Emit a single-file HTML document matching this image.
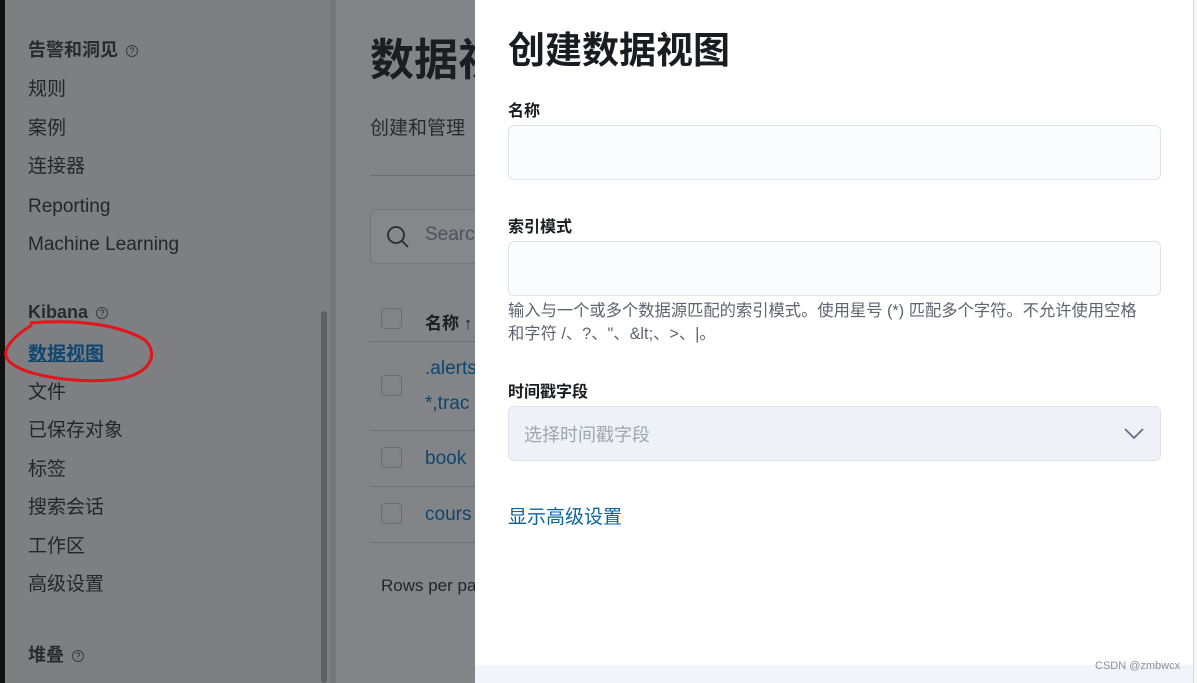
<!DOCTYPE html>
<html><head><meta charset="utf-8"><style>
*{margin:0;padding:0;box-sizing:border-box}
body{width:1197px;height:683px;overflow:hidden;position:relative;background:#838487;font-family:"Liberation Sans","Noto Sans CJK SC",sans-serif;}
.a{position:absolute;white-space:nowrap}
.side{position:absolute;left:0;top:0;width:330px;height:683px;background:#7e7f82}
.nav{font-size:19px;color:#25262a;left:28px;line-height:24px}
.h{font-weight:bold;font-size:18px;color:#2a2b2e;left:28px;line-height:24px}
.q{display:inline-block;width:12px;height:12px;border:1px solid #3a3b3e;border-radius:50%;font-size:9px;text-align:center;line-height:11px;vertical-align:middle;margin-left:8px;font-weight:normal}
.cb{position:absolute;left:381px;width:21px;height:21px;border:1px solid #6a6b70;border-radius:4px}
.ln{position:absolute;left:370px;width:105px;height:1px;background:#6d6e73}
.lnk{color:#0e466f;font-size:19px;line-height:24px}
.fly{position:absolute;left:475px;top:0;width:718px;height:683px;background:#fff}
.lab{font-weight:bold;font-size:16px;color:#1a1c21;left:33px}
.inp{position:absolute;left:33px;width:653px;height:55px;background:#fbfcfd;border:1px solid #dfe3ea;border-radius:6px}
</style></head><body>
<div class="side"></div>
<div class="a" style="left:0;top:0;width:5px;height:683px;background:#111"></div>
<div class="a" style="left:321px;top:311px;width:6px;height:372px;background:#5f6064;border-radius:3px"></div>
<div class="a" style="left:330px;top:0;width:6px;height:683px;background:#76777a"></div>
<div class="a h" style="top:38px">告警和洞见<span class="q">?</span></div>
<div class="a nav" style="top:78px">规则</div>
<div class="a nav" style="top:117px">案例</div>
<div class="a nav" style="top:155px">连接器</div>
<div class="a nav" style="top:195px">Reporting</div>
<div class="a nav" style="top:233px">Machine Learning</div>
<div class="a h" style="top:300px">Kibana<span class="q">?</span></div>
<div class="a nav" style="top:343px;color:#0e466f;font-weight:bold;text-decoration:underline">数据视图</div>
<div class="a nav" style="top:381px">文件</div>
<div class="a nav" style="top:419px">已保存对象</div>
<div class="a nav" style="top:458px">标签</div>
<div class="a nav" style="top:496px">搜索会话</div>
<div class="a nav" style="top:535px">工作区</div>
<div class="a nav" style="top:573px">高级设置</div>
<div class="a h" style="top:643px">堆叠<span class="q">?</span></div>
<svg class="a" style="left:0;top:315px" width="160" height="70"><path d="M30 8 C 80 4, 120 10, 145 25 C 160 40, 150 62, 110 65 C 70 68, 20 60, 8 45 C 0 35, 15 20, 32 10" fill="none" stroke="#e3141a" stroke-width="3"/></svg>
<div class="a" style="left:370px;top:24px;font-size:44px;font-weight:bold;color:#1c1d20">数据视图</div>
<div class="a" style="left:370px;top:113px;font-size:19px;color:#2a2b2e">创建和管理</div>
<div class="ln" style="top:175px"></div>
<div class="a" style="left:370px;top:209px;width:120px;height:55px;border:1px solid #75767b;border-radius:6px;background:#86878a"></div>
<svg class="a" style="left:385px;top:224px" width="26" height="26"><circle cx="11" cy="11" r="8" fill="none" stroke="#2a2b2e" stroke-width="1.8"/><path d="M17 17l6 6" stroke="#2a2b2e" stroke-width="1.8"/></svg>
<div class="a" style="left:425px;top:224px;font-size:19px;color:#505156">Search</div>
<div class="cb" style="top:308px"></div>
<div class="a" style="left:425px;top:309px;font-size:17px;font-weight:bold;color:#1c1d20">名称 ↑</div>
<div class="ln" style="top:341px"></div>
<div class="cb" style="top:375px"></div>
<div class="a lnk" style="left:425px;top:357px">.alerts</div>
<div class="a lnk" style="left:425px;top:392px">*,trac</div>
<div class="ln" style="top:430px"></div>
<div class="cb" style="top:447px"></div>
<div class="a lnk" style="left:425px;top:447px">book</div>
<div class="ln" style="top:486px"></div>
<div class="cb" style="top:503px"></div>
<div class="a lnk" style="left:425px;top:503px">cours</div>
<div class="ln" style="top:542px"></div>
<div class="a" style="left:381px;top:576px;font-size:17px;color:#25262a">Rows per page</div>
<div class="fly">
<div class="a" style="left:33px;top:20px;font-size:37px;font-weight:bold;color:#1a1c21">创建数据视图</div>
<div class="a lab" style="top:97px">名称</div>
<div class="inp" style="top:125px"></div>
<div class="a lab" style="top:213px">索引模式</div>
<div class="inp" style="top:241px"></div>
<div class="a" style="left:33px;top:300px;font-size:16.3px;color:#5e646f;line-height:23px">输入与一个或多个数据源匹配的索引模式。使用星号 (*) 匹配多个字符。不允许使用空格<br>和字符 /、?、"、&amp;lt;、&gt;、|。</div>
<div class="a lab" style="top:378px">时间戳字段</div>
<div class="inp" style="top:406px;background:#eef1f6;border-color:#e0e4ea"></div>
<div class="a" style="left:49px;top:421px;font-size:18px;color:#a0a5ad">选择时间戳字段</div>
<svg class="a" style="left:647px;top:425px" width="24" height="16"><path d="M3 4l9 9 9-9" fill="none" stroke="#69707d" stroke-width="1.8"/></svg>
<div class="a" style="left:33px;top:502px;font-size:19px;color:#0b64a0">显示高级设置</div>
<div class="a" style="left:0;top:665px;width:718px;height:18px;background:#f1f4fa"></div>
<div class="a" style="left:620px;top:660px;font-size:11px;color:#8a8f99">CSDN @zmbwcx</div>
</div>
<div class="a" style="left:1193px;top:0;width:4px;height:683px;background:#f7f8fa;border-left:1px solid #d8dbe0"></div>
</body></html>
